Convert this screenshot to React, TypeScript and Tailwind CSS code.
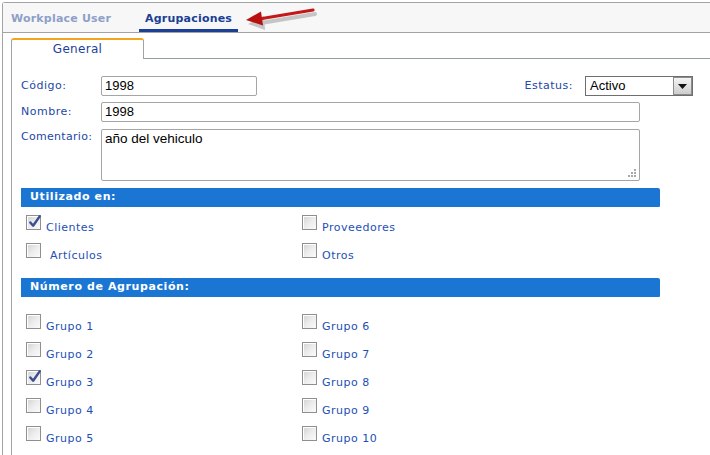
import { ReactNode } from "react"

const verdana = "font-['DejaVu_Sans',Verdana,sans-serif]"
const arial = "font-['Liberation_Sans',Arial,sans-serif]"

const Casilla = ({ marcada }: { marcada?: boolean }) => (
  <span className="relative block w-[15px] h-[15px] shrink-0 border border-[#8f8f8f] bg-gradient-to-br from-[#d2d2d2] via-[#ececec] to-[#fbfbfb] shadow-[inset_1px_1px_0_#ffffff]">
    {marcada && (
      <svg viewBox="0 0 15 15" className="absolute left-[1px] -top-[2px] w-[14px] h-[15px]">
        <path d="M2.5 8.5 L5.5 12 L12.5 2" fill="none" stroke="#3a4e90" strokeWidth="2.6" strokeLinecap="round" strokeLinejoin="round" />
      </svg>
    )}
  </span>
)

const Opcion = ({ texto, marcada }: { texto: ReactNode; marcada?: boolean }) => (
  <label className="flex items-end gap-[5px] h-[15px]">
    <Casilla marcada={marcada} />
    <span className={`${verdana} text-[11px] leading-none tracking-[0.5px] text-[#1d4fb4] translate-y-[3px] whitespace-pre`}>{texto}</span>
  </label>
)

const Barra = ({ titulo }: { titulo: string }) => (
  <div className={`${verdana} w-[639px] h-[19px] bg-[#1b76d3] rounded-tr-[2px] rounded-br-[1px] flex items-center pl-[9px] text-[11px] font-bold tracking-[0.6px] text-white`}>
    {titulo}
  </div>
)

const Flecha = () => (
  <svg className="absolute left-[236px] top-0 w-[84px] h-[30px]" viewBox="0 0 84 30">
    <g opacity="0.35" transform="translate(2 4)">
      <path d="M74 7 L20 16" stroke="#6b6b6b" strokeWidth="4" strokeLinecap="round" />
      <path d="M7 17 L23 9 L24 23 Z" fill="#6b6b6b" />
    </g>
    <path d="M74 7 L20 16" stroke="#c41818" strokeWidth="3.2" strokeLinecap="round" />
    <path d="M7 17 L22 8.5 L24 22.5 Z" fill="#b80f0f" />
  </svg>
)

export default function App() {
  const grupos = [1, 2, 3, 4, 5, 6, 7, 8, 9, 10]

  return (
    <main className="w-[710px] h-[455px] overflow-hidden bg-white pt-[2px] pl-[2px]">
      <div className="h-full border-l border-t border-[#a3a3a3] rounded-tl-[3px]">
        {/* pestañas principales */}
        <div className="relative h-[30px] bg-[#f7f7f7] border-b border-[#a3a3a3] flex items-end pl-[5px]">
          <div className={`${verdana} h-full flex items-center pt-[4px] px-[3px] text-[11px] font-bold tracking-[0.2px] text-[#8ea0c8]`}>
            Workplace User
          </div>
          <div className={`${verdana} ml-[25px] h-full w-[99px] flex items-center justify-center border-b-[3px] border-[#1b3f95] pt-[6px] text-[11px] font-bold tracking-[0.2px] text-[#1b3f95]`}>
            Agrupaciones
          </div>
          <Flecha />
        </div>

        <div className="pl-[8px] pt-[5px]">
          {/* sub pestaña */}
          <div className="flex items-end">
            <div className={`${verdana} w-[133px] h-[21px] border-t-2 border-x border-t-[#f5a41e] border-x-[#a3a3a3] rounded-t-[3px] flex items-center justify-center text-[12px] tracking-[0.3px] text-[#1d3f9c] pb-[1px]`}>
              General
            </div>
            <div className="flex-1 border-b border-[#8fa09a]" />
          </div>

          <div className="border-l border-[#a3a3a3] pl-[9px] pt-[17px] h-[400px]">
            {/* campos */}
            <div className="w-[672px] flex items-center">
              <span className={`${verdana} w-[80px] text-[11px] tracking-[0.5px] text-[#2348a6]`}>Código:</span>
              <div className={`${arial} w-[156px] h-[20px] border border-[#a5a5a5] rounded-[2px] pl-[3px] flex items-center text-[13px] text-black`}>1998</div>
              <span className={`${verdana} ml-auto text-[11px] tracking-[0.5px] text-[#2348a6]`}>Estatus:</span>
              <div className="ml-[12px] w-[108px] h-[20px] border border-[#6e6e6e] flex items-stretch">
                <span className={`${arial} flex-1 pl-[4px] flex items-center text-[13px] text-black`}>Activo</span>
                <span className="w-[19px] border border-[#8c8c8c] bg-gradient-to-b from-[#f4f4f4] to-[#cdcdcd] flex items-center justify-center">
                  <svg viewBox="0 0 9 5" className="w-[9px] h-[5px]"><path d="M0 0 H9 L4.5 5 Z" fill="#111" /></svg>
                </span>
              </div>
            </div>

            <div className="flex items-center mt-[6px]">
              <span className={`${verdana} w-[80px] text-[11px] tracking-[0.5px] text-[#2348a6]`}>Nombre:</span>
              <div className={`${arial} w-[539px] h-[20px] border border-[#a5a5a5] rounded-[2px] pl-[3px] flex items-center text-[13px] text-black`}>1998</div>
            </div>

            <div className="flex items-start mt-[7px]">
              <span className={`${verdana} w-[80px] text-[11px] tracking-[0.3px] text-[#2348a6]`}>Comentario:</span>
              <div className={`${arial} relative w-[539px] h-[52px] border border-[#a5a5a5] rounded-[2px] pl-[3px] text-[13.5px] leading-[17px] text-black`}>
                año del vehiculo
                <svg viewBox="0 0 9 9" className="absolute right-[2px] bottom-[2px] w-[9px] h-[9px]">
                  <g fill="#a8a8a8">
                    <rect x="6" y="0" width="2" height="2" />
                    <rect x="3" y="3" width="2" height="2" />
                    <rect x="6" y="3" width="2" height="2" />
                    <rect x="0" y="6" width="2" height="2" />
                    <rect x="3" y="6" width="2" height="2" />
                    <rect x="6" y="6" width="2" height="2" />
                  </g>
                </svg>
              </div>
            </div>

            <div className="mt-[7px]">
              <Barra titulo="Utilizado en:" />
            </div>
            <div className="grid grid-cols-[276px_1fr] gap-y-[13px] pl-[5px] pt-[8px]">
              <Opcion texto="Clientes" marcada />
              <Opcion texto="Proveedores" />
              <Opcion texto=" Artículos" />
              <Opcion texto="Otros" />
            </div>

            <div className="mt-[20px]">
              <Barra titulo="Número de Agrupación:" />
            </div>
            <div className="grid grid-cols-[276px_1fr] grid-rows-5 grid-flow-col gap-y-[13px] pl-[5px] pt-[17px]">
              {grupos.map((n) => (
                <Opcion key={n} texto={`Grupo ${n}`} marcada={n === 3} />
              ))}
            </div>
          </div>
        </div>
      </div>
    </main>
  )
}
